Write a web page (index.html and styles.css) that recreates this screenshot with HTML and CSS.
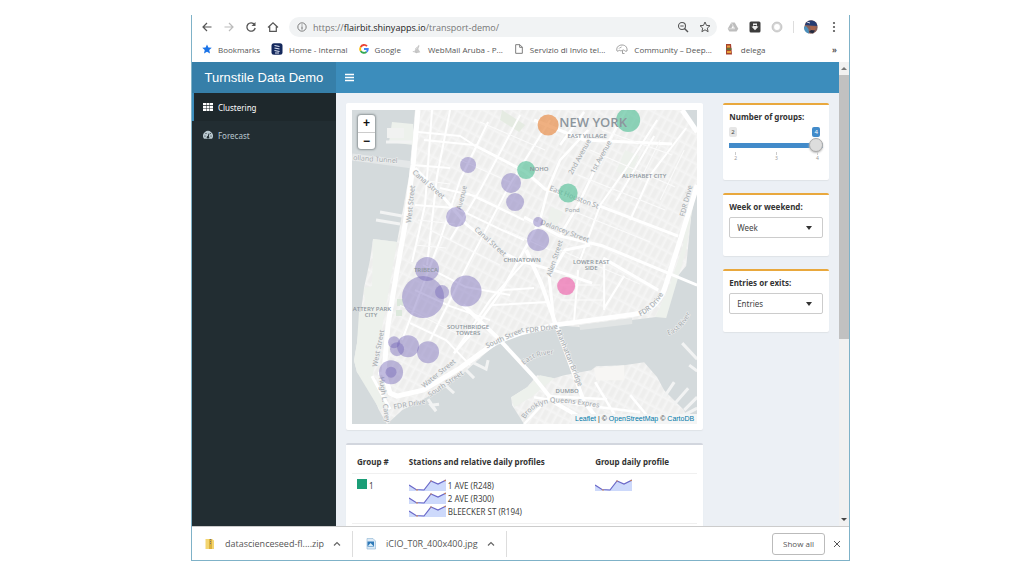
FILE: index.html
```html
<!DOCTYPE html>
<html lang="en">
<head>
<meta charset="utf-8">
<title>Turnstile Data Demo</title>
<link rel="stylesheet" href="styles.css">
</head>
<body>
<svg width="0" height="0" class="defs" aria-hidden="true">
  <symbol id="spark" viewBox="0 0 37 13">
    <path d="M0 6L7 10.500H15L22 2L29 5L37 1V12H0Z" fill="#cdd9fb"/>
    <path d="M0 6L7 10.500L15 11L22 2L29 5L37 1" fill="none" stroke="#6a68c8" stroke-width="1.200"/>
    <circle cx="8" cy="11" r=".8" fill="#e08a4a"/><circle cx="22" cy="2" r=".7" fill="#e08a4a"/><circle cx="36" cy="1.500" r=".8" fill="#e08a4a"/>
  </symbol>
  <symbol id="chev" viewBox="0 0 8 8"><path d="M1 5.500L4 2.500L7 5.500" fill="none" stroke="#666" stroke-width="1.200"/></symbol>
</svg>
<div class="browser">
  <div class="toolbar">
    <button class="icon-btn" aria-label="Back"><svg viewBox="0 0 12 12"><path d="M10.500 6H2M6 2L2 6L6 10" fill="none" stroke="#555" stroke-width="1.200"/></svg></button>
    <button class="icon-btn" aria-label="Forward"><svg viewBox="0 0 12 12"><path d="M1.500 6H10M6 2L10 6L6 10" fill="none" stroke="#bbb" stroke-width="1.200"/></svg></button>
    <button class="icon-btn" aria-label="Reload"><svg viewBox="0 0 12 12"><path d="M9.500 3.500A4.200 4.200 0 1 0 10.200 7" fill="none" stroke="#555" stroke-width="1.300"/><path d="M10.500 1V5H6.500Z" fill="#555"/></svg></button>
    <button class="icon-btn" aria-label="Home"><svg viewBox="0 0 12 12"><path d="M1 6.500L6 1.800L11 6.500M2.700 5.500V10.300H9.300V5.500" fill="none" stroke="#555" stroke-width="1.200"/></svg></button>
    <div class="omnibox">
      <svg class="ico10" viewBox="0 0 12 12"><circle cx="6" cy="6" r="5" fill="none" stroke="#666"/><path d="M6 5.300V9M6 3V4.200" stroke="#666" stroke-width="1.200"/></svg>
      <span class="url">https://<b>flairbit.shinyapps.io</b>/transport-demo/</span>
      <button class="icon-btn" aria-label="Zoom"><svg viewBox="0 0 12 12"><circle cx="5" cy="5" r="3.500" fill="none" stroke="#555" stroke-width="1.100"/><path d="M7.500 7.500L11 11" stroke="#555" stroke-width="1.400"/><path d="M3.300 5H6.700" stroke="#555"/></svg></button>
      <button class="icon-btn" aria-label="Bookmark this page"><svg viewBox="0 0 12 12"><path d="M6 1L7.500 4.400L11 4.700L8.300 7.100L9.100 10.700L6 8.800L2.900 10.700L3.700 7.100L1 4.700L4.500 4.400Z" fill="none" stroke="#555"/></svg></button>
    </div>
    <div class="extensions">
      <svg class="ico12" viewBox="0 0 12 12"><path d="M4.300 1.500H7.700L11.300 7.800L9.600 10.500H2.400L.7 7.800Z" fill="#bdbdbd"/><path d="M6 4.500L7.800 7.600H4.200Z" fill="#fff"/><path d="M4.500 2L7.500 7.500M7.800 7.800H1.500" stroke="#ddd"/></svg>
      <svg class="ico12" viewBox="0 0 12 12"><rect x=".5" y=".5" width="11" height="11" rx="1.500" fill="#3c3c3c"/><path d="M4 2.500H8V5.500H9.500L6 9.300L2.500 5.500H4Z" fill="#eee"/><path d="M4.500 4.500H7.500" stroke="#3c3c3c"/></svg>
      <svg class="ico12" viewBox="0 0 12 12"><circle cx="6" cy="6" r="4" fill="none" stroke="#d4d4d4" stroke-width="2.200"/><circle cx="6" cy="6" r="5" fill="none" stroke="#b5b5b5" stroke-width=".6"/></svg>
      <i class="divider"></i>
      <svg class="ico14" viewBox="0 0 14 14"><circle cx="7" cy="7" r="6.700" fill="#87605a"/><path d="M1 5C2 1 6 0 9 .8S13 4 13.300 6L6 5.500Z" fill="#263c72"/><path d="M0 7C0 11 2 13 5 13.500L4.500 9L2 6Z" fill="#4a90bd"/><path d="M6 6L12 6.500L11 10L7 11Z" fill="#a8644c"/><path d="M5 12L7 10L11 10.500L9 13.500Z" fill="#222b42"/><path d="M3 2L6 3" stroke="#d9dce8"/></svg>
      <button class="icon-btn" aria-label="Menu"><svg viewBox="0 0 12 12" fill="#555"><circle cx="6" cy="2" r="1.100"/><circle cx="6" cy="6" r="1.100"/><circle cx="6" cy="10" r="1.100"/></svg></button>
    </div>
  </div>
  <nav class="bookmarks" aria-label="Bookmarks">
    <a href="#"><svg class="ico10" viewBox="0 0 12 12"><path d="M6 .5L7.700 4.200L11.700 4.600L8.700 7.300L9.600 11.300L6 9.200L2.400 11.300L3.300 7.300L.3 4.600L4.300 4.200Z" fill="#1a73e8"/></svg>Bookmarks</a>
    <a href="#"><svg class="ico12" viewBox="0 0 12 12"><rect x=".5" y=".3" width="11" height="11.400" rx="2.500" fill="#14285c"/><path d="M3.500 2.500L8.500 3.500M3.500 5L8.500 6M3.500 7.500L8.500 8.500M4 10H8" stroke="#dfe5f5" stroke-width="1.200"/></svg>Home - Internal</a>
    <a href="#"><svg class="ico10" viewBox="0 0 12 12" fill="none" stroke-width="2.200"><path d="M9.600 2.600A4.700 4.700 0 0 0 2 3.700" stroke="#ea4335"/><path d="M2 3.700A4.700 4.700 0 0 0 2 8.300" stroke="#fbbc05"/><path d="M2 8.300A4.700 4.700 0 0 0 9 9.500" stroke="#34a853"/><path d="M9 9.500A4.500 4.500 0 0 0 10.600 6H6" stroke="#4285f4"/></svg>Google</a>
    <a href="#"><svg class="ico10" viewBox="0 0 12 12"><path d="M5 11C2 9 3 6 6 5L8 1L9 2L7.500 6L10 10Z" fill="#c8c8c8"/><path d="M1 9L6 10M4 6L7 3" stroke="#bbb"/></svg>WebMail Aruba - P...</a>
    <a href="#"><svg class="ico10" viewBox="0 0 12 12"><path d="M2 .8H7L10 3.800V11.200H2ZM6.800 1V4H10" fill="none" stroke="#666"/></svg>Servizio di Invio tel...</a>
    <a href="#"><svg class="ico12" viewBox="0 0 12 12"><path d="M1 8C0 5 2 2 6 2S11.500 5 11 8C9 9 8.500 7 7.500 7S5 8.500 4 7.500S2 9 1 8ZM6.500 7.500V10.500H8.500M3 5.500C4 4 5 5 5.500 4" fill="none" stroke="#888" stroke-width=".8"/></svg>Community – Deep...</a>
    <a href="#"><svg class="ico12" viewBox="0 0 12 12"><path d="M3 1H8L9 11.500H3Z" fill="#a8432f"/><path d="M4 2.500H7V4.500H4ZM4 8H8V10H4Z" fill="#e6a43c"/><path d="M3.500 6H8.500" stroke="#4f7f3d" stroke-width="1.500"/></svg>delega</a>
    <button class="more" aria-label="More bookmarks">»</button>
  </nav>
  <div class="viewport">
    <div class="app">
      <header class="app-header">
        <a class="logo" href="#">Turnstile Data Demo</a>
        <button class="toggle" aria-label="Toggle sidebar"><svg viewBox="0 0 9 9"><path d="M0 1.500H9M0 4.500H9M0 7.500H9" stroke="#fff" stroke-width="1.400"/></svg></button>
      </header>
      <div class="app-body">
        <aside class="sidebar">
          <a class="active" href="#"><svg class="ico10" viewBox="0 0 10 10" fill="#fff"><path d="M0 1H3V3.300H0ZM3.500 1H6.500V3.300H3.500ZM7 1H10V3.300H7ZM0 3.900H3V6.200H0ZM3.500 3.900H6.500V6.200H3.500ZM7 3.900H10V6.200H7ZM0 6.800H3V9H0ZM3.500 6.800H6.500V9H3.500ZM7 6.800H10V9H7Z"/></svg>Clustering</a>
          <a href="#"><svg class="ico10" viewBox="0 0 10 10"><path d="M1 8.800A4.900 4.900 0 1 1 9 8.800Z" fill="#b8c7ce"/><path d="M5 7.500L6 3.500" stroke="#222d32"/><g fill="#222d32"><circle cx="5" cy="7.300" r="1.200"/><circle cx="2" cy="6" r=".6"/><circle cx="3" cy="3.500" r=".6"/><circle cx="8" cy="6" r=".6"/><circle cx="7.500" cy="3.500" r=".5"/></g></svg>Forecast</a>
        </aside>
        <main class="content">
          <div class="col">
            <section class="box plain map-box">
              <div class="map">
                <svg class="map-svg" viewBox="352 110 345 314" preserveAspectRatio="xMidYMid slice" role="img" aria-label="Map of stations">
                  <defs>
                    <pattern id="blocks" width="7" height="13" patternUnits="userSpaceOnUse" patternTransform="rotate(28)"><rect width="7" height="13" fill="#f3f3f2"/><path d="M1.500 1.500H5.500V11.500H1.500Z" fill="#eeeeed"/><path d="M0 0H7M0 0V13" stroke="#f8f8f8"/></pattern>
                    <path id="fdr1" d="M640 316Q658 308 668 284"/>
                    <path id="bqe" d="M525 419Q533 404 555 402Q580 403 615 411"/>
                    <path id="er" d="M524 365Q538 352 565 354"/>
                    <path id="er2" d="M668 335Q686 330 696 300"/>
                  </defs>
                  <rect x="352" y="110" width="345" height="314" fill="#d4dadc"/>
                  <path fill="url(#blocks)" d="M415 110H684L687 118L697 132V186L691 216L686 266L674 280L664 307L656 317L632 320L579 327L554 325L524 332L511 338L491 348L461 375L427 397L402 410L387 424L379 410L372 393L366 380L357 372L354 360L357 343L364 288L370 260L373 239L397 242L409 176Z"/>
                  <path fill="url(#blocks)" d="M524 424L512 405L511 397L527 387L537 375L554 378L564 375L591 370L596 366L624 365L644 362L657 377L664 390L674 400L684 410L688 424Z"/>
                  <g fill="#edf1ec">
                    <path d="M392 122L413 124V145L389 142Z"/><path d="M373 239L397 242L387 300L379 345L372 378L357 372L354 360L357 343L359 312L365 310L364 288L372 286Z"/>
                    <path d="M695 190L691 216L686 250L666 318L655 317L668 290L683 245L685 222Z"/><path d="M625 150L639 156L629 178L616 171Z"/>
                    <path d="M502 110L525 125L519 132L500 120Z" fill="#e5ebe2"/><path d="M357 372L372 378L388 404L380 410Z"/>
                    <path d="M511 397L527 387L540 375L554 378L531 397L514 407Z"/><path d="M551 207L563 212L556 228L547 224Z"/>
                    <path d="M397 299H403V306H397ZM396 310H402V316H396Z" fill="#dce8dc"/>
                  </g>
                  <g fill="#f1f2f1"><path d="M579 325L632 318V324L580 330Z" fill="#e2e5e5"/><path d="M387 128H404V138H387Z"/><path d="M594 368L624 365V380H596Z" fill="#f7f6f4"/></g>
                  <g fill="none" stroke="#f2f3f3" stroke-width="3">
                    <path d="M380 212L402 216M376 220L400 224M386 142H412"/><path stroke-width="7" d="M352 157L413 165" stroke="#e4e7e8"/>
                    <path d="M428 399L436 411L431 405L439 404M444 384L454 393M466 370L474 378M472 362L486 369L488 360"/>
                    <path d="M682 343L697 359M664 397L674 382M674 404L688 388M684 410L697 397M689 365L697 371M680 417L697 408"/>
                  </g>
                  <g fill="none" stroke="#fff" stroke-linejoin="round">
                    <path stroke-width="5" d="M418 110L413 165L405 225L397 270L388 325L384 372L390 393L397 396L423 390L460 368L496 342L520 333L554 325L635 314Q655 311 664 290L680 240L697 185"/>
                    <path stroke-width="5" d="M682 110L697 132"/>
                    <path stroke-width="3" d="M378 373H387M372 376L390 409M415 168L444 198L466 224L502 252L524 263M474 145L526 172L545 189L592 203L678 236M534 120L584 140L672 144"/>
                    <path stroke-width="3" d="M524 217L560 236L603 246L697 285M524 262L560 272L592 283M603 258L658 290M590 245L565 250L549 276L554 324"/>
                    <path stroke-width="4" d="M526 250L541 283L556 325L584 402L602 424M463 305L498 338L534 377L554 402L585 420"/>
                    <path stroke-width="2.500" d="M588 130L560 160L548 189L540 220L524 250L502 290L470 335L454 353M584 112L560 145M626 110L604 150L578 205L560 235"/>
                    <path stroke-width="2" d="M657 120L625 170L600 205L580 260M686 128L650 175L630 220M654 136L616 201M450 110L437 176L427 265M432 110L425 205L412 262M488 122L460 180L440 240L402 340M550 120L510 184L470 260L430 340M520 115L480 190L450 240"/>
                    <path stroke-width="2" d="M418 132L460 136L474 145M424 140L474 145M412 165L450 168M415 205L456 208L502 230L524 240M467 193L524 220M440 188L475 196L520 218M423 265L466 287L510 295M415 290L450 306L490 320M410 323L446 340L470 365M500 290L534 288M492 305L548 302M526 260L490 300L454 353M604 260V310M578 270L574 320M624 276L604 308"/>
                    <path stroke-width="2.500" d="M524 424L550 396L607 399M534 397L584 405L640 412M595 382L620 424M630 395L654 424"/>
                  </g>
                  <g stroke="#fbfbfb" fill="none"><path d="M590 150L675 187M578 175L665 210M570 210L650 242M560 250L640 284M480 122L545 150M460 160L510 182M430 230L500 265M400 305L460 335M505 230L550 250M420 180L450 184M418 220L455 224M415 245L446 248M602 130L672 155M600 165L620 120M640 180L660 140M660 200L684 150M560 300H604M560 285H600"/></g>
                  <g class="street">
                    <text transform="translate(353 160) rotate(4)">olland Tunnel</text>
                    <text transform="translate(412 173) rotate(41)">Canal Street</text>
                    <text transform="translate(474 230) rotate(42)">Canal Street</text>
                    <text transform="translate(411 223) rotate(-84)">West Street</text>
                    <text transform="translate(377 367) rotate(-79)">West Street</text>
                    <text transform="translate(461 210) rotate(-76)">Avenue</text>
                    <text transform="translate(572 175) rotate(-61)">2nd Avenue</text>
                    <text transform="translate(594 174) rotate(-61)">1st Avenue</text>
                    <text transform="translate(549 190) rotate(21)">East Houston St</text>
                    <text transform="translate(540 224) rotate(21)">Delancey Street</text>
                    <text transform="translate(551 277) rotate(-72)">Allen Street</text>
                    <text transform="translate(684 217) rotate(-75)">FDR Drive</text>
                    <text transform="translate(424 388) rotate(-39)">Water Street</text>
                    <text transform="translate(430 397) rotate(-34)">South Street</text>
                    <text transform="translate(487 348) rotate(-24)">South Street</text>
                    <text transform="translate(526 333) rotate(-8)">FDR Drive</text>
                    <text transform="translate(394 409) rotate(-10)">FDR Drive</text>
                    <text transform="translate(379 377) rotate(82)">Hugh L. Carey</text>
                    <text transform="translate(556 331) rotate(68)">Manhattan Bridge</text>
                    <text><textPath href="#fdr1">FDR Drive</textPath></text>
                    <text><textPath href="#bqe">Brooklyn Queens Expres</textPath></text>
                    <text><textPath href="#er">East River</textPath></text>
                    <text><textPath href="#er2">East River</textPath></text>
                    <text class="small" x="565" y="212">Pond</text>
                  </g>
                  <g fill="#7668b8" fill-opacity=".45">
                    <circle cx="468" cy="165" r="8"/><circle cx="511" cy="183" r="10"/><circle cx="515" cy="202" r="9"/><circle cx="456" cy="217" r="10"/><circle cx="538" cy="222" r="5"/><circle cx="538" cy="240" r="11"/><circle cx="427" cy="269" r="12"/><circle cx="423" cy="297" r="21"/><circle cx="442" cy="292" r="7"/><circle cx="466" cy="291" r="15.500"/><circle cx="394" cy="342" r="6"/><circle cx="397" cy="349" r="7"/><circle cx="408" cy="346" r="11"/><circle cx="428" cy="352" r="11"/><circle cx="391" cy="372" r="12"/><circle cx="391" cy="372" r="5.500"/>
                  </g>
                  <g fill="#5ac19b" fill-opacity=".68"><circle cx="628" cy="120" r="12"/><circle cx="526" cy="170" r="9"/><circle cx="568" cy="193" r="9.500"/></g>
                  <circle cx="548" cy="125" r="10.500" fill="#e88b45" fill-opacity=".68"/>
                  <circle cx="566" cy="286" r="9" fill="#ed6db0" fill-opacity=".72"/>
                  <g class="place">
                    <text class="city" x="593" y="127">NEW YORK</text>
                    <text x="587" y="138">EAST VILLAGE</text><text x="539" y="171">NOHO</text><text x="644" y="178">ALPHABET CITY</text><text x="522" y="262">CHINATOWN</text>
                    <text x="591" y="264">LOWER EAST</text><text x="591" y="270">SIDE</text><text x="426" y="272">TRIBECA</text><text x="372" y="311">ATTERY PARK</text><text x="371" y="317">CITY</text>
                    <text x="468" y="329">SOUTHBRIDGE</text><text x="468" y="335">TOWERS</text><text x="567" y="393">DUMBO</text>
                  </g>
                </svg>
                <div class="zoomer"><button aria-label="Zoom in">+</button><button aria-label="Zoom out">−</button></div>
                <div class="attribution"><a href="#">Leaflet</a> | © <a href="#">OpenStreetMap</a> © <a href="#">CartoDB</a></div>
              </div>
            </section>
            <section class="box plain">
              <table class="groups">
                <thead><tr><th>Group #</th><th class="wide">Stations and relative daily profiles</th><th>Group daily profile</th></tr></thead>
                <tbody><tr>
                  <td><i class="swatch"></i>1</td>
                  <td>
                    <div class="station"><svg class="spark"><use href="#spark"/></svg>1 AVE (R248)</div>
                    <div class="station"><svg class="spark"><use href="#spark"/></svg>2 AVE (R300)</div>
                    <div class="station"><svg class="spark"><use href="#spark"/></svg>BLEECKER ST (R194)</div>
                  </td>
                  <td><svg class="spark"><use href="#spark"/></svg></td>
                </tr></tbody>
              </table>
            </section>
          </div>
          <div class="col">
            <section class="box control">
              <label for="groups">Number of groups:</label>
              <div class="bubbles"><span>2</span><output for="groups">4</output></div>
              <input class="slider" id="groups" type="range" min="2" max="4" value="4">
              <div class="ticks"><span>2</span><span>3</span><span>4</span></div>
            </section>
            <section class="box control">
              <label for="week">Week or weekend:</label>
              <div class="pick"><select id="week"><option>Week</option><option>Weekend</option></select></div>
            </section>
            <section class="box control">
              <label for="flow">Entries or exits:</label>
              <div class="pick"><select id="flow"><option>Entries</option><option>Exits</option></select></div>
            </section>
          </div>
        </main>
      </div>
    </div>
    <div class="scrollbar" aria-hidden="true"><i class="up"></i><i class="bar"></i><i class="down"></i></div>
  </div>
  <footer class="downloads">
    <div class="file"><svg class="ico12" viewBox="0 0 12 12"><path d="M1.500 1H8L10 2.500V11H1.500Z" fill="#f3d571"/><path d="M5 1H8V11H5Z" fill="#dcb23c"/><path d="M6.500 1V7" stroke="#777" stroke-dasharray="1 1"/></svg><span>datascienceseed-fl....zip</span><button aria-label="Options"><svg><use href="#chev"/></svg></button></div>
    <div class="file"><svg class="ico12" viewBox="0 0 12 12"><path d="M2 .5H8L10.500 3V11H2Z" fill="#dceaf6" stroke="#8cb3d4" stroke-width=".6"/><rect x="2.500" y="3.500" width="6.500" height="5" fill="#2f79b8"/><path d="M3 8L5.500 5L8.500 8Z" fill="#d8edf8"/></svg><span>iCIO_T0R_400x400.jpg</span><button aria-label="Options"><svg><use href="#chev"/></svg></button></div>
    <button class="show-all">Show all</button>
    <button class="close" aria-label="Close"><svg viewBox="0 0 8 8"><path d="M1 1L7 7M7 1L1 7" stroke="#555"/></svg></button>
  </footer>
</div>
</body>
</html>
```
FILE: styles.css
```css
* { box-sizing: border-box; }
body { margin: 0; background: #fff; font-family: "Noto Sans", sans-serif; font-size: 8px; color: #444; }
button { border: 0; padding: 0; background: none; font: inherit; color: inherit; }
a { color: inherit; text-decoration: none; }
svg { display: block; flex: none; }
.defs { position: absolute; }
.ico10 { width: 10px; height: 10px; }
.ico12 { width: 12px; height: 12px; }
.ico14 { width: 14px; height: 14px; }

.browser { display: flex; flex-direction: column; height: calc(100vh - 30px); margin: 15px 17% 15px 18.65%; border: 1px solid #7fb2c8; border-top: 0; }
.toolbar { display: flex; align-items: center; gap: 10px; height: 24px; padding: 0 9px; flex: none; }
.icon-btn svg { width: 12px; height: 12px; }
.omnibox { display: flex; flex: 1; align-items: center; gap: 10px; height: 20px; padding: 0 6px 0 8px; border-radius: 10px; background: #f1f3f4; }
.url { flex: 1; margin-left: -4px; font-family: "Open Sans", sans-serif; font-size: 9px; color: #777; white-space: nowrap; }
.url b { font-weight: 400; color: #222; }
.extensions { display: flex; align-items: center; gap: 10px; }
.divider { width: 1px; height: 12px; background: #ddd; }
.bookmarks { display: flex; align-items: center; gap: 11px; height: 23px; padding: 0 12px 3px 10px; flex: none; font-family: "Open Sans", sans-serif; font-size: 8px; color: #555; white-space: nowrap; }
.bookmarks a { display: flex; align-items: center; gap: 6px; }
.more { margin-left: auto; font-weight: 700; }

.viewport { display: flex; flex: 1; min-height: 0; }
.app { display: flex; flex: 1; flex-direction: column; min-width: 0; }
.app-header { display: flex; height: 31px; flex: none; background: #3c8dbc; }
.logo { width: 144px; background: #367fa9; color: #fff; font: 13px/31px "Liberation Sans", sans-serif; text-align: center; }
.toggle { margin-left: 9px; }
.toggle svg { width: 9px; height: 9px; }
.app-body { display: flex; flex: 1; min-height: 0; }
.sidebar { width: 144px; flex: none; background: #222d32; color: #b8c7ce; }
.sidebar a { display: flex; align-items: center; gap: 5px; height: 28px; padding-left: 9px; border-left: 2px solid transparent; }
.sidebar a.active { border-color: #3c8dbc; background: #1e282c; color: #fff; }

.content { display: grid; flex: 1; grid-template-columns: minmax(0, 3fr) minmax(0, 1fr); padding-top: 10px; overflow: hidden; background: #ecf0f5; }
.col { display: flex; flex-direction: column; gap: 13px; padding: 0 10px; }
.box { flex: none; background: #fff; border-top: 2px solid #e9a83d; border-radius: 2px; box-shadow: 0 1px 1px #dfe3e7; }
.box.plain { border-top-color: #d2d6de; padding: 5px 6px 6px; }
.box.map-box { border-top-color: #fff; }
.map { position: relative; }
.map-svg { width: 100%; height: auto; }
.street { font: 7px "Noto Sans", sans-serif; fill: #a3a8ac; stroke: #f1f2f2; stroke-width: 1px; paint-order: stroke; }
.street .small { font-size: 6px; }
.place { font: 6px "Open Sans", sans-serif; font-weight: 600; fill: #8d969d; text-anchor: middle; }
.place .city { font-size: 13px; }
.zoomer { position: absolute; top: 5px; left: 6px; display: grid; width: 17px; border-radius: 3px; background: #fff; box-shadow: 0 0 2px 1px #8f9799; }
.zoomer button { height: 17px; color: #111; font: 700 12px/17px "Liberation Sans", sans-serif; }
.zoomer button + button { border-top: 1px solid #ccc; }
.attribution { position: absolute; right: 0; bottom: 0; padding: 0 3px; background: #f4f5f5; font: 7px/10px "Liberation Sans", sans-serif; color: #333; }
.attribution a { color: #0078a8; }

.groups { width: 100%; border-collapse: collapse; table-layout: fixed; }
.groups th, .groups td { padding: 5px; line-height: 13px; text-align: left; vertical-align: top; }
.groups th { width: 31%; color: #333; border-bottom: 1px solid #f0f0f0; }
.groups th:first-child { width: 15%; }
.groups .wide { width: 54%; }
.groups tr { border-bottom: 1px solid #f0f0f0; }
.swatch { display: inline-block; width: 10px; height: 10px; margin-right: 2px; background: #1b9e77; }
.station { display: flex; align-items: center; gap: 2px; }
.spark { width: 37px; height: 13px; }

.control { padding: 6px 6px 18px; }
.control label { display: block; font-weight: 700; line-height: 12px; color: #333; }
.bubbles { display: flex; justify-content: space-between; margin-top: 4px; padding-right: 3px; font-size: 6px; line-height: 10px; }
.bubbles span, .bubbles output { padding: 0 2px; border-radius: 2px; background: #e6e6e6; }
.bubbles output { background: #428bca; color: #fff; }
.slider { display: block; width: 100%; height: 14px; margin: 1px 0 0; appearance: none; background: linear-gradient(#428bca, #428bca) center / 100% 5px no-repeat; border-radius: 3px; }
.slider::-webkit-slider-thumb { appearance: none; width: 14px; height: 14px; border: 1px solid #aaa; border-radius: 50%; background: #ddd; box-shadow: 0 1px 2px #bbb; }
.ticks { display: flex; justify-content: space-between; padding: 0 4px 0 5px; font-size: 5px; line-height: 7px; color: #999; }
.ticks span::before { content: ""; display: block; width: 1px; height: 3px; margin: 0 auto; background: #ccc; }
.pick { position: relative; margin-top: 4px; }
.pick::after { content: ""; position: absolute; right: 11px; top: 9px; border: 3px solid transparent; border-top: 4px solid #333; border-bottom: 0; pointer-events: none; }
.pick select { display: block; width: 100%; height: 21px; padding: 0 7px; appearance: none; border: 1px solid #ccc; border-radius: 2px; background: #fff; color: #444; font: inherit; }

.scrollbar { display: flex; flex-direction: column; align-items: center; width: 10px; flex: none; background: #f1f1f1; }
.up, .down { margin: 5px 0; border: 3px solid transparent; }
.up { border-top: 0; border-bottom-color: #777; }
.down { margin-top: auto; border-bottom: 0; border-top-color: #444; }
.bar { width: 100%; height: 57%; background: #c1c1c1; }

.downloads { display: flex; align-items: center; height: 34px; flex: none; border-top: 1px solid #ccc; font-family: "Open Sans", sans-serif; font-size: 9px; color: #555; white-space: nowrap; }
.file { display: flex; align-items: center; gap: 9px; height: 26px; padding: 0 11px 0 12px; border-right: 1px solid #ddd; }
.file svg { width: 12px; height: 12px; }
.file button svg { width: 8px; height: 8px; }
.show-all { height: 22px; margin-left: auto; padding: 0 10px; border: 1px solid #bbb; border-radius: 3px; font-size: 8px; }
.close { margin: 0 8px; }
.close svg { width: 8px; height: 8px; }
```
